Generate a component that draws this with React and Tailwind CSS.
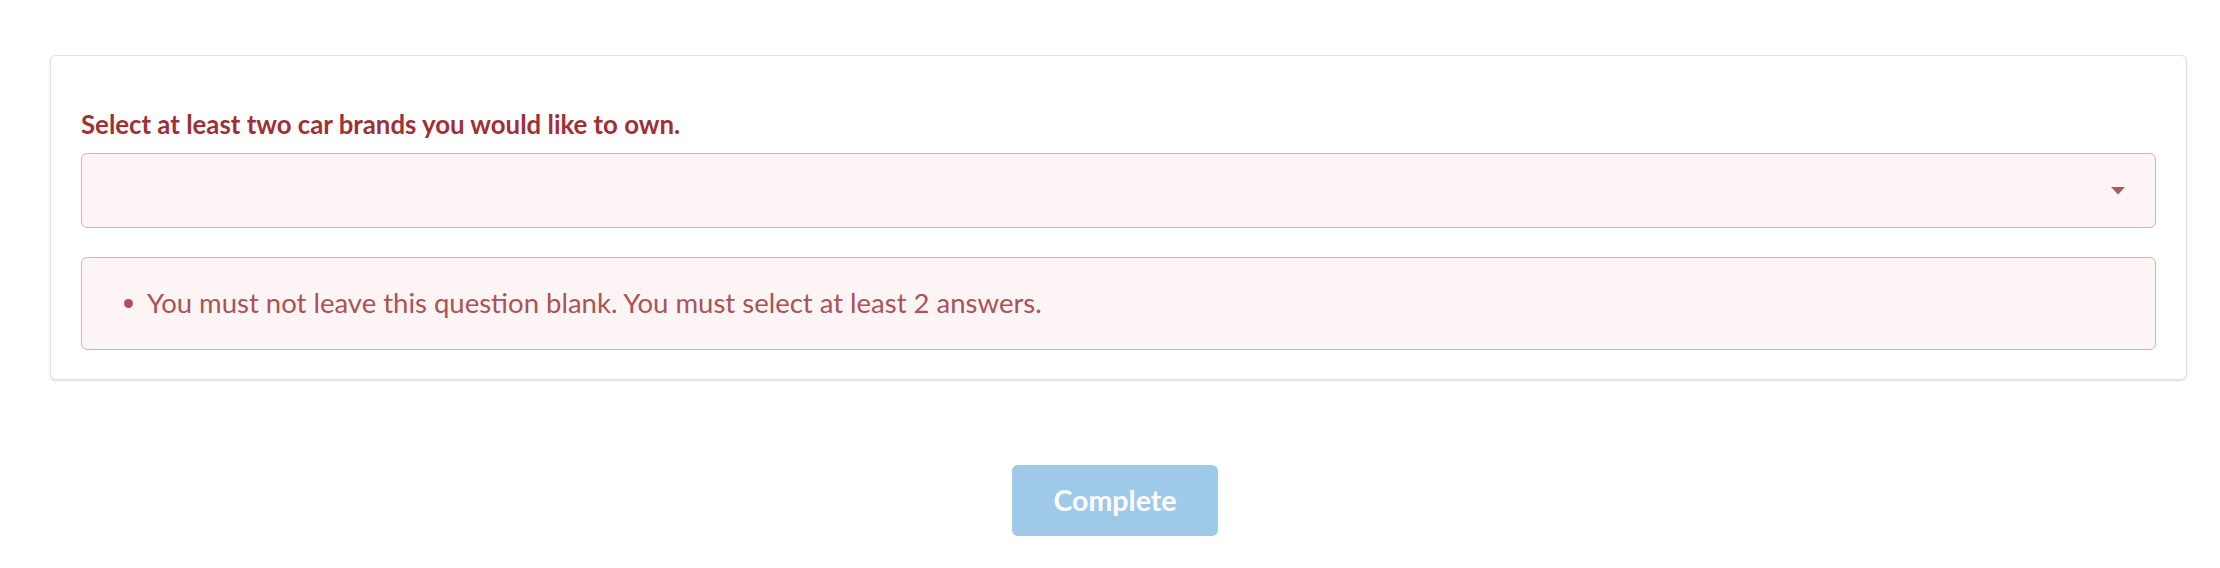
import React from "react";

const ErrorBox = ({ children }) => (
  <div className="mt-[29px] rounded-md border border-[#deafaf] bg-[#fdf5f5] px-[42px] pt-[27px] pb-[28px]">
    <div className="flex items-center gap-[14px] text-[27.5px] leading-[36px] text-[#ac5255]">
      <span className="h-[9px] w-[9px] shrink-0 rounded-full bg-[#ac5255]" />
      <span>{children}</span>
    </div>
  </div>
);

const App = () => {
  return (
    <div className="min-h-[568px] bg-white pt-[55px] pl-[50px] pr-[33px] font-[Lato,sans-serif]">
      {/* Question card */}
      <div className="rounded-md border border-[#e1e1e1] bg-white px-[30px] pt-[50px] pb-[29px] shadow-[0_1px_2px_rgba(0,0,0,0.12)]">
        <h2 className="text-[25.8px] font-bold leading-[36px] text-[#9e3136]">
          Select at least two car brands you would like to own.
        </h2>

        <div className="mt-[11px] flex h-[75px] items-center justify-end rounded-md border border-[#deafaf] bg-[#fdf5f5] pr-[30px]">
          <svg width="14" height="8" viewBox="0 0 14 8">
            <path d="M0 0 H14 L7 7.5 Z" fill="#b05758" />
          </svg>
        </div>

        <ErrorBox>
          You must not leave this question blank. You must select at least 2 answers.
        </ErrorBox>
      </div>

      {/* Footer */}
      <div className="mt-[85px] flex justify-center pr-[7px]">
        <button className="h-[71px] w-[206px] rounded-md bg-[#9fc9e8] text-[28.5px] font-bold text-white">
          Complete
        </button>
      </div>
    </div>
  );
};

export default App;
